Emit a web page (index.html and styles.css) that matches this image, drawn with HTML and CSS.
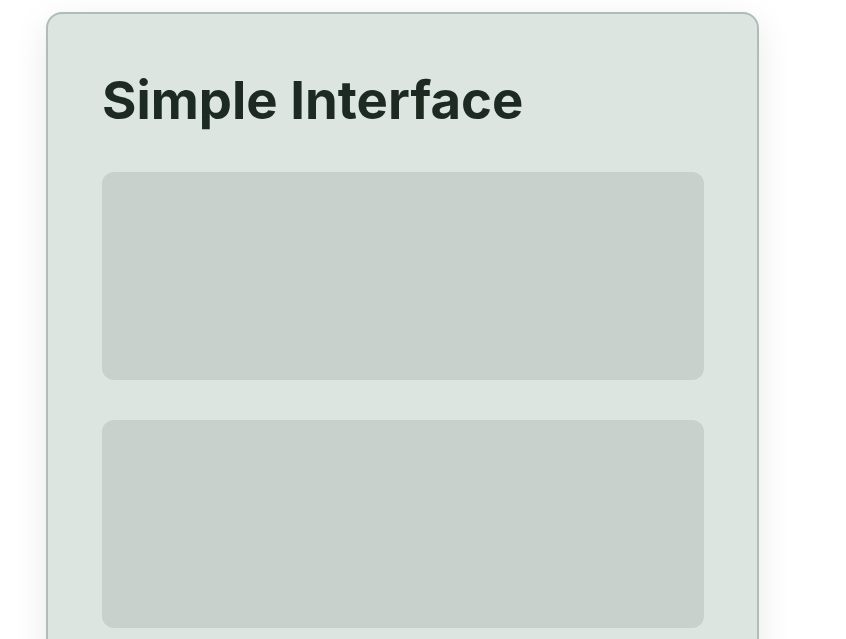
FILE: index.html
```html
<!DOCTYPE html>
<html>
<head>
<meta charset="utf-8">
<link rel="stylesheet" href="styles.css">
</head>
<body>
<div class="card">
  <h1 class="title">Simple Interface</h1>
  <div class="panel"></div>
  <div class="panel"></div>
</div>
</body>
</html>
```
FILE: styles.css
```css
html, body {
  margin: 0;
  padding: 0;
  background: #ffffff;
  height: 100%;
  overflow: hidden;
}
body {
  font-family: Inter, "Liberation Sans", sans-serif;
  padding: 12px 0 0 46px;
}
.card {
  box-sizing: border-box;
  width: 713px;
  height: 700px;
  background: #dce5e0;
  border: 2px solid #b0bcb5;
  border-radius: 16px;
  padding: 55px 53px 54px 54px;
  box-shadow: 0 10px 36px rgba(0, 0, 0, 0.09);
  display: flex;
  flex-direction: column;
  gap: 40px;
}
.title {
  margin: 0;
  font-size: 52.7px;
  font-weight: 700;
  line-height: 1.2;
  color: #1c2a22;
}
.panel {
  flex: none;
  height: 208px;
  background: #c8d1cc;
  border-radius: 12px;
}
```
